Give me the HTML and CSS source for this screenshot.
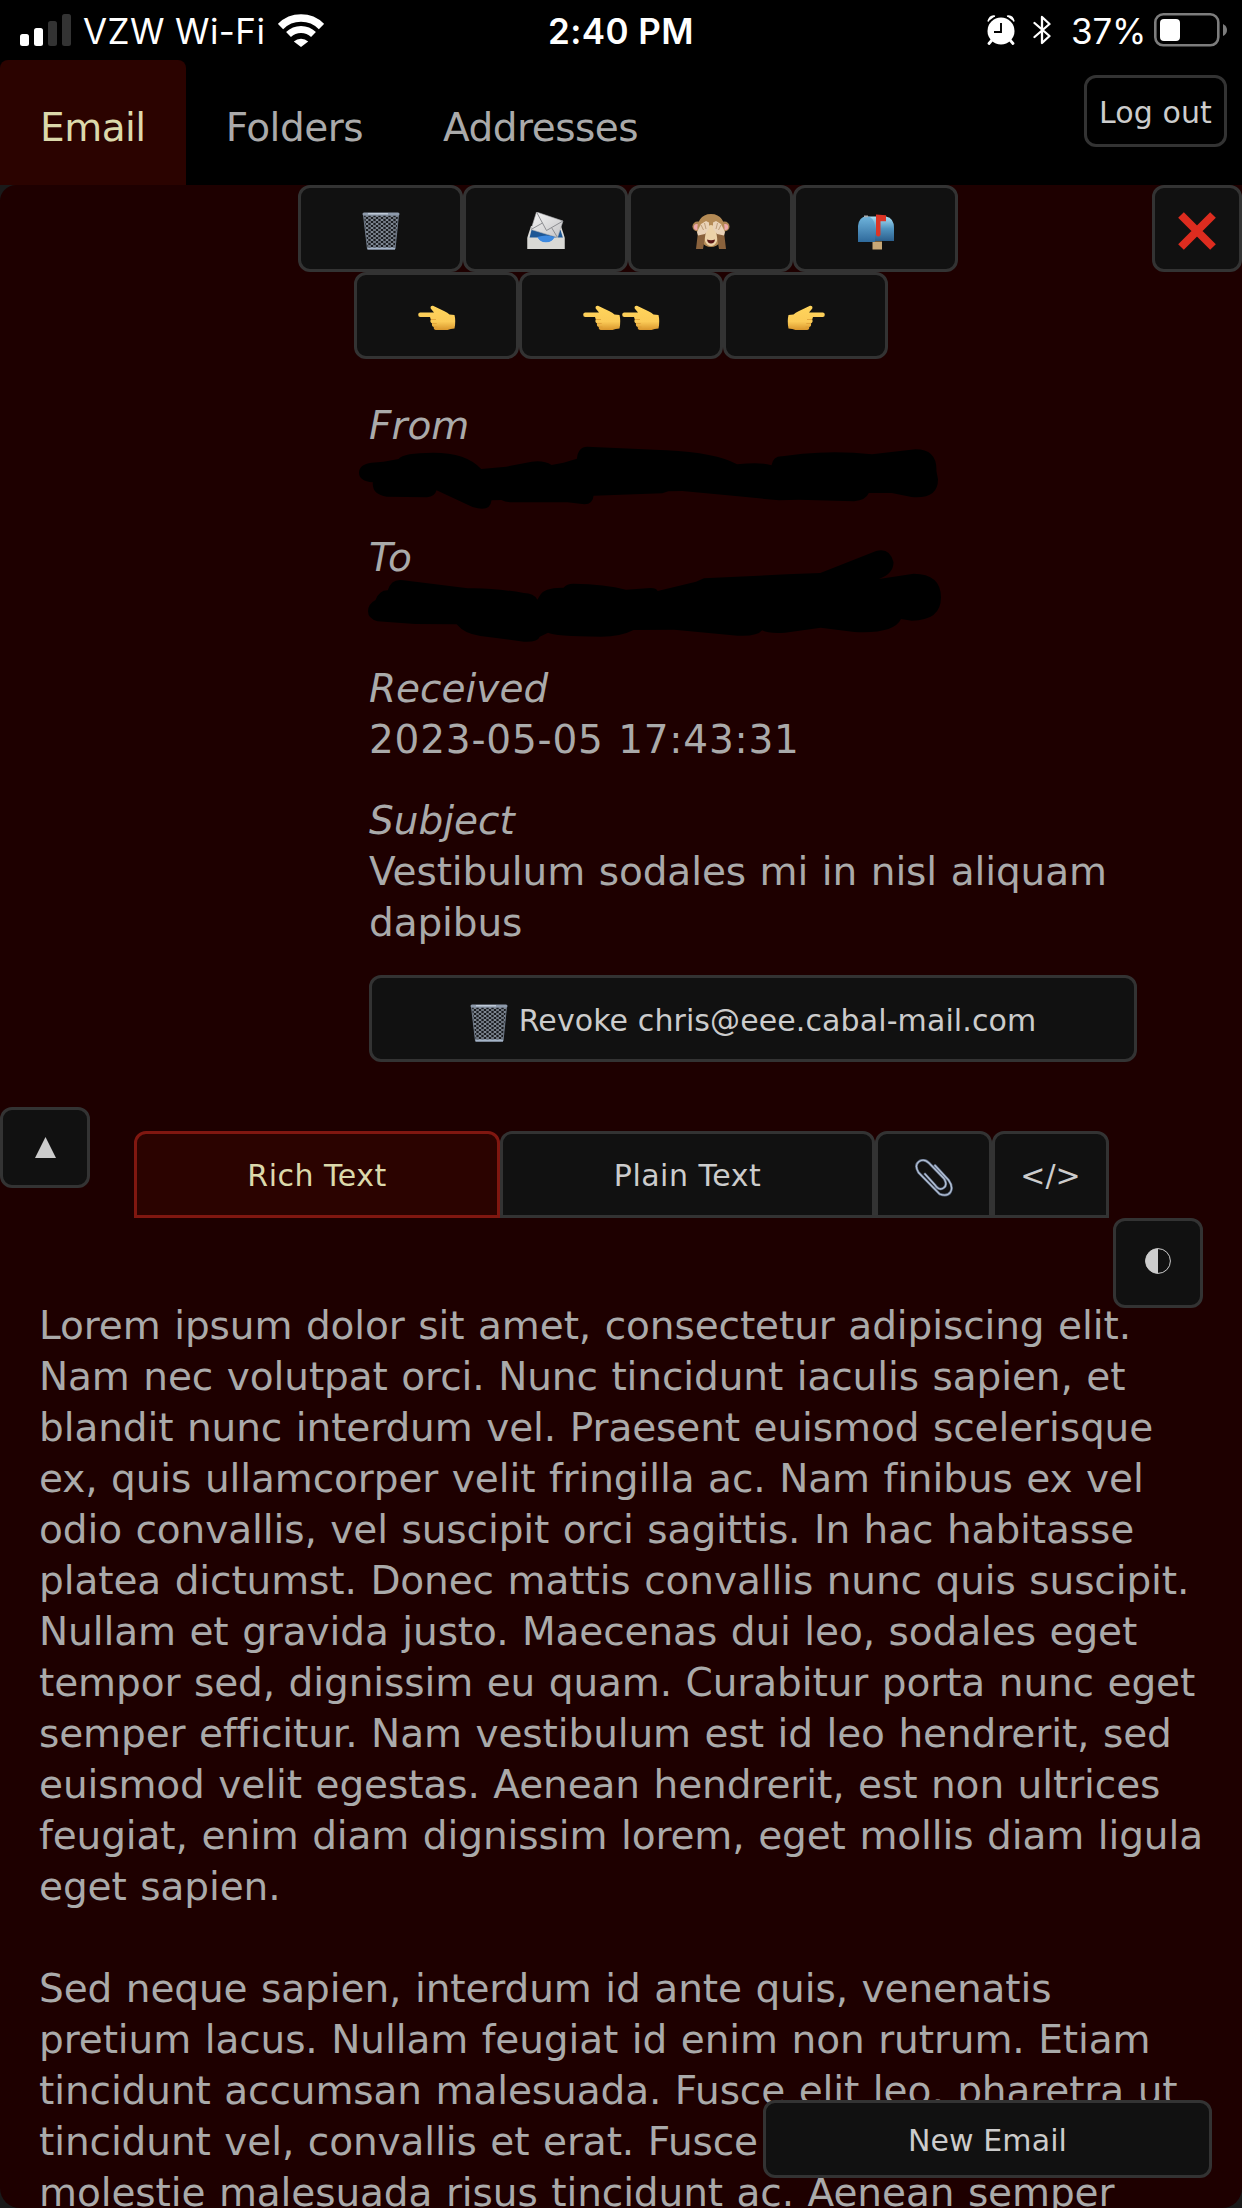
FILE: index.html
```html
<!DOCTYPE html>
<html lang="en">
<head>
<meta charset="utf-8">
<title>Email</title>
<link rel="stylesheet" href="styles.css">
</head>
<body>
<svg class="defs" width="0" height="0" aria-hidden="true">
  <defs>
    <linearGradient id="skin" x1="0" y1="0" x2="0" y2="1"><stop offset="0" stop-color="#ffd45c"/><stop offset=".65" stop-color="#fbcb57"/><stop offset="1" stop-color="#d9962c"/></linearGradient>
    <linearGradient id="box" x1="0" y1="0" x2="0" y2="1"><stop offset="0" stop-color="#6fb4dc"/><stop offset="1" stop-color="#2f6a9c"/></linearGradient>
    <linearGradient id="boxside" x1="0" y1="0" x2="0" y2="1"><stop offset="0" stop-color="#a9e0f6"/><stop offset=".5" stop-color="#4f93bf"/><stop offset="1" stop-color="#2c5f8c"/></linearGradient>
    <linearGradient id="paper" x1="0" y1="0" x2="1" y2="1"><stop offset="0" stop-color="#f4f4f4"/><stop offset="1" stop-color="#c4c4c6"/></linearGradient>
    <pattern id="mesh" width="5" height="4" patternUnits="userSpaceOnUse"><path d="M0 0 5 4M5 0 0 4" stroke="#8a93a0" stroke-width="1" fill="none"/></pattern>
    <symbol id="trash" viewBox="0 0 38 38">
      <path d="M1.500 3 5.500 37h27.500L36.500 3z" fill="#1b1d20"/>
      <path d="M1.500 3 5.500 37h27.500L36.500 3z" fill="url(#mesh)" stroke="#6c7684" stroke-width="1"/>
      <path d="M5.500 36.500h27.500" stroke="#a5b4c8" stroke-width="2.200"/>
      <rect x=".5" y=".6" width="37" height="3" rx="1.500" fill="#8d9aab"/>
      <path d="M6 1.800h20" stroke="#d3dde8" stroke-width="1"/>
    </symbol>
    <symbol id="inbox" viewBox="0 0 38 38">
      <path d="M4 14h30l3.500 11v12H.5V25z" fill="#dcdcda"/>
      <path d="M4.500 18h29L36 26H2.500z" fill="#1e5795"/>
      <path d="M9.500 0 36 9 30.500 25.500 4 17.500z" fill="url(#paper)" stroke="#b4b4b6" stroke-width=".6"/>
      <path d="M9.500 0 19.500 18.500 36 9M4 17.500 15.500 11M30.500 25.500 24.500 15.500" fill="none" stroke="#8d8e92" stroke-width="1"/>
      <path d="M10 25q9.500-3 18 0-2 5.500-9 5.500T10 25z" fill="#3d89df"/>
      <path d="M.5 25.500h10q3 5 8.500 5t8.500-5h10V37H.5z" fill="#d9d9d5"/>
    </symbol>
    <symbol id="monkey" viewBox="0 0 38 38">
      <circle cx="5.500" cy="14.500" r="5" fill="#ad8453"/><circle cx="32.500" cy="14.500" r="5" fill="#ad8453"/>
      <circle cx="4.800" cy="15" r="3" fill="#eda7ac"/><circle cx="33.200" cy="15" r="3" fill="#eda7ac"/>
      <path d="M19 2C9 2 4.500 10 5.500 19c0 8 6 16 13.500 16s13.500-8 13.500-16C33.500 10 29 2 19 2z" fill="#b48a55"/>
      <path d="M19 13c-5 0-8 9-6 16q2 5 6 5t6-5c2-7-1-16-6-16z" fill="#ecd2a8"/>
      <path d="M15 27.500q4 1.500 8 0-.5 4-4 4t-4-4z" fill="#5b1715"/>
      <path d="M4 37l2-17 8-1-3 18zM34 37l-2-17-8-1 3 18z" fill="#8a623c"/>
      <path d="M5 20l4-8 2.500-1.500L14 9l3 1.500v6L13 22l-7 1.500zM33 20l-4-8-2.500-1.500L24 9l-3 1.500v6l4 5.500 7 1.500z" fill="#e9d2b7"/>
      <path d="M9 13l2.500 5M12.500 11l1.500 6M29 13l-2.500 5M25.500 11 24 17" stroke="#b89672" stroke-width=".9"/>
    </symbol>
    <symbol id="mailbox" viewBox="0 0 38 38">
      <path d="M15.500 27h9.500v10.500h-9.500z" fill="#c7a877"/><path d="M15.500 28h9.500v2h-9.500z" fill="#6c5a3c"/>
      <path d="M9 4.500h20Q37 6 37 16v13H17z" fill="url(#boxside)"/>
      <path d="M1 30V14Q2 4.500 9.500 4.500T18 14v16z" fill="url(#box)"/>
      <path d="M7 3.500h4v1.800H7z" fill="#a9adb1"/>
      <path d="M19 2.500l10 .8v6h-5.500V23q-2 3-4.500 0z" fill="#dd3526"/>
    </symbol>
    <symbol id="point" viewBox="0 0 38 26">
      <path d="M2.300 7.600H16L12.700 3.500Q12 .5 15 .8l11.500 5.400q3 1.400 5 3.200l5 .6q1.500 6 0 13.600-4 .4-7 1.400L18 25q-2.700-.5-2.200-3-2.600-1-1.700-3.600-2.600-1.300-1.300-4L12 12H2.300Q.2 12 .2 9.800T2.300 7.600z" fill="url(#skin)"/>
      <path d="M13 14.500h5M14.200 18.500h4.500M16 22h3.500" stroke="#dd9d35" stroke-width=".8"/>
    </symbol>
    <symbol id="clip" viewBox="0 0 38 38">
      <path d="M20 6.500 33.500 21Q38.500 28 35.500 33T24.500 35L3.500 13.500Q-1 6 4 2.500T14 4L29 19.500Q33 26 28.500 29T20 26L10 15" fill="none" stroke="#5d6a80" stroke-width="2.600" stroke-linecap="round"/>
      <path d="M20 6.500 33.500 21Q38.500 28 35.500 33T24.500 35L3.500 13.500Q-1 6 4 2.500T14 4L29 19.500Q33 26 28.500 29T20 26L10 15" fill="none" stroke="#b3c1d6" stroke-width="1.300" stroke-linecap="round"/>
    </symbol>
  </defs>
</svg>

<div class="screen">
  <div class="status">
    <svg class="signal" viewBox="0 0 51 32"><rect x="0" y="20" width="9" height="12" rx="2.500" fill="#fff"/><rect x="14" y="14" width="9" height="18" rx="2.500" fill="#fff"/><rect x="28" y="7" width="9" height="25" rx="2.500" fill="#333"/><rect x="42" y="0" width="9" height="32" rx="2.500" fill="#333"/></svg>
    <span class="carrier">VZW Wi-Fi</span>
    <svg class="wifi" viewBox="0 0 46 33" fill="none" stroke="#fff"><path d="M2.500 12.500a29 29 0 0 1 41 0" stroke-width="7.500"/><path d="M10.500 20.500a18 18 0 0 1 25 0" stroke-width="7"/><path d="M15.800 27.500a10.500 10.500 0 0 1 14.400 0L23 33z" fill="#fff" stroke="none"/></svg>
    <span class="clock">2:40 PM</span>
    <svg class="alarm" viewBox="0 0 28 30"><circle cx="14" cy="16" r="13.500" fill="#fff"/><path d="M1 6.500Q3 0 8 1.200M20 1.200Q25.500 0 27 6.500" fill="#fff" stroke="#fff" stroke-width="1.500"/><path d="M5 25l-3 3.500M23 25l3 3.500" stroke="#fff" stroke-width="2.800" stroke-linecap="round"/><path d="M14 8v9H7" fill="none" stroke="#000" stroke-width="1.900"/></svg>
    <svg class="bt" viewBox="0 0 18 30" fill="none" stroke="#fff" stroke-width="2.300" stroke-linejoin="round" stroke-linecap="round"><path d="M1.500 8 16.500 21 9 28V2l7.500 7L1.500 22"/></svg>
    <span class="percent">37%</span>
    <svg class="battery" viewBox="0 0 73 34"><rect x="1.300" y="1.300" width="63" height="31" rx="8" fill="none" stroke="#7c7c7c" stroke-width="2.600"/><rect x="6" y="6" width="20" height="22" rx="4" fill="#fff"/><path d="M69 11q4 2 4 6t-4 6z" fill="#7c7c7c"/></svg>
  </div>

  <nav class="nav">
    <a class="nav-tab active">Email</a><a class="nav-tab">Folders</a><a class="nav-tab">Addresses</a>
    <button class="btn logout">Log out</button>
  </nav>

  <main class="panel">
    <div class="toolbar">
      <div class="tools first">
        <button class="btn tool"><svg class="emoji"><use href="#trash"/></svg></button>
        <button class="btn tool"><svg class="emoji"><use href="#inbox"/></svg></button>
        <button class="btn tool"><svg class="emoji"><use href="#monkey"/></svg></button>
        <button class="btn tool"><svg class="emoji"><use href="#mailbox"/></svg></button>
      </div>
      <div class="tools">
        <button class="btn tool"><svg class="hand"><use href="#point"/></svg></button>
        <button class="btn tool double"><svg class="hand"><use href="#point"/></svg><svg class="hand"><use href="#point"/></svg></button>
        <button class="btn tool"><svg class="hand flip"><use href="#point"/></svg></button>
      </div>
      <button class="btn close"><svg class="cross" viewBox="0 0 38 38"><path d="M3 3 35 35M35 3 3 35" stroke="#dd2c1f" stroke-width="8"/></svg></button>
    </div>

    <dl class="meta">
      <div class="field"><dt>From</dt><dd class="hidden-value">
        <svg class="redact" viewBox="48 140 1464 192" preserveAspectRatio="none"><path d="M80 190Q48 195 48 220T83 249Q80 285 118 292L220 294Q240 292 244 273L335 323Q380 340 383 303L408 302Q418 309 435 309L575 309 618 315Q640 313 641 289L815 282 830 276 865 275 980 288 1110 303 1160 301 1300 306Q1330 302 1337 281L1395 281 1445 293Q1512 300 1512 240L1508 215Q1510 150 1455 150L1345 165Q1260 153 1170 163L1118 171Q1095 170 1091 198 1065 187 1004 195 950 160 825 153L625 142Q602 142 599 178L565 190 535 197Q515 182 485 187L420 202 357 209Q320 160 235 160 160 160 148 179L110 187z"/></svg></dd></div>
      <div class="field"><dt>To</dt><dd class="hidden-value">
        <svg class="redact to" viewBox="71 448 1448 276" preserveAspectRatio="none"><path d="M90 598Q71 610 71 632T95 662L190 670 295 671Q315 700 355 706L465 723Q500 725 505 708L526 696Q540 706 660 708 710 708 742 688L845 687 1005 705Q1055 708 1067 689 1085 700 1125 696L1215 681 1300 694Q1400 700 1418 655L1445 660Q1519 660 1519 590T1450 519L1362 535Q1399 520 1399 485 1390 440 1355 451L1214 517 1130 521 920 533 900 543 803 571Q800 562 785 562L723 567Q670 550 590 549 573 549 565 561 515 560 505 585L499 597Q490 577 465 577 380 560 323 563L160 539Q130 533 121 569 100 568 90 598z"/></svg></dd></div>
      <div class="field"><dt>Received</dt><dd class="date">2023-05-05 17:43:31</dd></div>
      <div class="field"><dt>Subject</dt><dd>Vestibulum sodales mi in nisl aliquam<br>dapibus</dd></div>
    </dl>
    <button class="btn revoke"><svg class="emoji"><use href="#trash"/></svg><span>Revoke chris@eee.cabal-mail.com</span></button>

    <div class="view-bar">
      <button class="btn collapse"><svg viewBox="0 0 21 21"><path d="M10.500 0 21 21H0z" fill="#ccc"/></svg></button>
      <div class="views">
        <button class="btn view rich active">Rich Text</button>
        <button class="btn view plain">Plain Text</button>
        <button class="btn view small"><svg class="emoji"><use href="#clip"/></svg></button>
        <button class="btn view small">&lt;/&gt;</button>
      </div>
    </div>

    <article class="message">
      <button class="btn contrast"><svg viewBox="0 0 26 26"><circle cx="13" cy="13" r="12.400" fill="none" stroke="#ccc" stroke-width="1"/><path d="M13 .5a12.500 12.500 0 0 0 0 25z" fill="#ccc"/></svg></button>
      <p>Lorem ipsum dolor sit amet, consectetur adipiscing elit.<br>Nam nec volutpat orci. Nunc tincidunt iaculis sapien, et<br>blandit nunc interdum vel. Praesent euismod scelerisque<br>ex, quis ullamcorper velit fringilla ac. Nam finibus ex vel<br>odio convallis, vel suscipit orci sagittis. In hac habitasse<br>platea dictumst. Donec mattis convallis nunc quis suscipit.<br>Nullam et gravida justo. Maecenas dui leo, sodales eget<br>tempor sed, dignissim eu quam. Curabitur porta nunc eget<br>semper efficitur. Nam vestibulum est id leo hendrerit, sed<br>euismod velit egestas. Aenean hendrerit, est non ultrices<br>feugiat, enim diam dignissim lorem, eget mollis diam ligula<br>eget sapien.</p>
      <p>Sed neque sapien, interdum id ante quis, venenatis<br>pretium lacus. Nullam feugiat id enim non rutrum. Etiam<br>tincidunt accumsan malesuada. Fusce elit leo, pharetra ut<br>tincidunt vel, convallis et erat. Fusce<br>molestie malesuada risus tincidunt ac. Aenean semper</p>
    </article>
  </main>
  <button class="btn compose">New Email</button>
</div>
</body>
</html>
```
FILE: styles.css
```css
* { box-sizing: border-box; }
body { margin: 0; background: #000; }
.defs { position: absolute; }
.screen {
  position: relative;
  display: flex;
  flex-direction: column;
  width: 1242px;
  height: 2208px;
  overflow: hidden;
  background: #1a1a1a;
  font: 39px/51px "DejaVu Sans", Verdana, sans-serif;
  font-variant-ligatures: none;
  color: #aaa;
}

.status {
  position: relative;
  display: flex;
  align-items: center;
  flex: none;
  height: 60px;
  padding: 0 15px 0 20px;
  background: #000;
  font: 35px/56px Inter, sans-serif;
  color: #fff;
}
.status span { margin-top: 2px; }
.signal { width: 51px; height: 32px; }
.carrier { margin-left: 12px; letter-spacing: .4px; }
.wifi { width: 46px; height: 33px; margin-left: 13px; }
.clock { position: absolute; left: 0; right: 0; text-align: center; font-weight: 600; letter-spacing: .4px; }
.alarm { width: 28px; height: 30px; margin-left: auto; }
.bt { width: 18px; height: 30px; margin-left: 18px; }
.percent { margin-left: 20px; letter-spacing: -.3px; }
.battery { width: 73px; height: 34px; margin-left: 8px; }

.nav {
  display: flex;
  flex: none;
  height: 125px;
  background: #000;
  letter-spacing: -.5px;
}
.nav-tab { padding: 42px 40px 0; border-radius: 8px 8px 0 0; }
.nav-tab.active { background: #2b0300; color: #dcd9ab; }

.btn {
  display: flex;
  align-items: center;
  justify-content: center;
  margin: 0;
  padding: 0;
  border: 3px solid #333;
  border-radius: 12px;
  background: #111;
  color: #ccc;
  font: 30px/36px "DejaVu Sans", Verdana, sans-serif;
  letter-spacing: .1px;
  white-space: nowrap;
}
.logout { width: 143px; height: 72px; margin: 15px 15px 0 auto; padding-top: 3px; background: #000; }

.panel {
  flex: 1;
  min-height: 0;
  overflow: hidden;
  background: #1e0000;
  border-radius: 16px 0 20px 20px;
}
.toolbar { position: relative; display: flex; flex-direction: column; align-items: center; }
.tools { display: flex; }
.tools.first { margin-left: 14px; }
.tool { width: 165px; height: 87px; padding-left: 1px; }
.tool.double { width: 204.500px; gap: 1px; }
.emoji { width: 38px; height: 38px; margin-top: 4px; }
.hand { width: 38px; height: 26px; margin-top: 5px; }
.flip { transform: scaleX(-1); }
.close { position: absolute; top: 0; right: 0; width: 90px; height: 87px; }
.cross { width: 38px; height: 38px; margin-top: 4px; }

.meta { display: flex; flex-direction: column; gap: 29.700px; width: 768px; margin: 41px 0 0 369px; }
.meta dt { font-style: italic; }
.meta dd { margin: 0; letter-spacing: -.1px; word-spacing: 1.300px; }
.meta .date { letter-spacing: .8px; }
.hidden-value { position: relative; height: 51px; }
.redact { position: absolute; left: -10px; top: -5px; width: 579px; height: 64px; }
.redact.to { left: -1px; top: -33px; width: 573px; height: 92px; }
.revoke { width: 768px; height: 87px; margin: 27px 0 0 369px; padding-top: 4px; gap: 11px; }

.view-bar { display: flex; margin-top: 45px; }
.collapse { width: 90px; height: 81px; }
.collapse svg { width: 21px; height: 21px; }
.views { display: flex; margin: 24px 0 0 44px; }
.view { height: 87px; padding-top: 2px; border-radius: 12px 12px 0 0; letter-spacing: .5px; }
.view.active { background: #2b0300; border-color: #801710; color: #dcd9ab; }
.rich { width: 366px; }
.plain { width: 375px; }
.small { width: 117px; letter-spacing: 0; }

.message {
  position: relative;
  padding: 82px 0 0 39px;
  letter-spacing: -.1px;
  word-spacing: 1.300px;
  white-space: nowrap;
}
.message p { margin: 0 0 51px; }
.contrast { position: absolute; top: 0; right: 39px; width: 90px; height: 90px; }
.contrast svg { width: 26px; height: 26px; margin-top: -5px; }

.compose { position: absolute; right: 30px; bottom: 30px; width: 449px; height: 78px; padding-top: 3px; }
```
